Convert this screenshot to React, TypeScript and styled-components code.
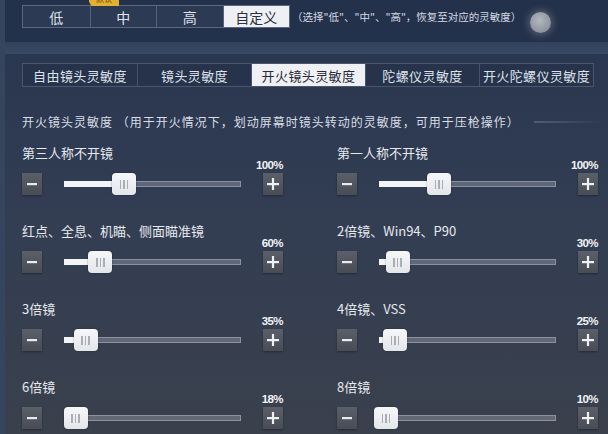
import styled, { createGlobalStyle } from "styled-components";

const GlobalStyle = createGlobalStyle`
  html, body {
    margin: 0;
    padding: 0;
    width: 608px;
    height: 434px;
    overflow: hidden;
    background: #2b3851;
  }
  * {
    box-sizing: border-box;
  }
`;

const CJK = `"Noto Sans CJK SC", "Noto Sans", sans-serif`;

const MAX = 300;
const TRACK = 177;

type Setting = { label: string; value: number };

const settings: Setting[] = [
  { label: "第三人称不开镜", value: 100 },
  { label: "第一人称不开镜", value: 100 },
  { label: "红点、全息、机瞄、侧面瞄准镜", value: 60 },
  { label: "2倍镜、Win94、P90", value: 30 },
  { label: "3倍镜", value: 35 },
  { label: "4倍镜、VSS", value: 25 },
  { label: "6倍镜", value: 18 },
  { label: "8倍镜", value: 10 },
];

const levels = ["低", "中", "高", "自定义"];
const tabs = ["自由镜头灵敏度", "镜头灵敏度", "开火镜头灵敏度", "陀螺仪灵敏度", "开火陀螺仪灵敏度"];

const App = (): JSX.Element => {
  return (
    <>
      <GlobalStyle />
      <Page>
        <TopBar>
          <Segments>
            <Badge>默认</Badge>
            {levels.map((l) => (
              <Segment key={l} $active={l === "自定义"}>
                {l}
              </Segment>
            ))}
          </Segments>
          <Hint>（选择"低"、"中"、"高"，恢复至对应的灵敏度）</Hint>
          <Knob />
        </TopBar>
        <Band />
        <Panel>
          <Tabs>
            {tabs.map((t) => (
              <Tab key={t} $active={t === "开火镜头灵敏度"}>
                {t}
              </Tab>
            ))}
          </Tabs>
          <Desc>
            开火镜头灵敏度 （用于开火情况下，划动屏幕时镜头转动的灵敏度，可用于压枪操作）
            <Dot />
          </Desc>
          <Grid>
            {settings.map((s) => {
              const center = (s.value / MAX) * TRACK;
              return (
                <Item key={s.label}>
                  <Label>{s.label}</Label>
                  <Value>{s.value}%</Value>
                  <Controls>
                    <StepButton>
                      <svg width="10" height="10" viewBox="0 0 10 10">
                        <rect x="0" y="4" width="10" height="2.2" fill="#e9ebee" />
                      </svg>
                    </StepButton>
                    <Track>
                      <Fill style={{ width: center }} />
                      <Handle style={{ left: center - 12 }}>
                        <Grip />
                        <Grip />
                        <Grip />
                      </Handle>
                    </Track>
                    <StepButton>
                      <svg width="12" height="12" viewBox="0 0 12 12">
                        <rect x="0" y="5" width="12" height="2.2" fill="#eef0f2" />
                        <rect x="4.9" y="0" width="2.2" height="12" fill="#eef0f2" />
                      </svg>
                    </StepButton>
                  </Controls>
                </Item>
              );
            })}
          </Grid>
        </Panel>
      </Page>
    </>
  );
};

export default App;

const Page = styled.div`
  width: 608px;
  height: 434px;
  display: flex;
  flex-direction: column;
  border-left: 5px solid #36455e;
  font-family: ${CJK};
  color: #e4e8ee;
  overflow: hidden;
`;

const TopBar = styled.div`
  height: 42px;
  display: flex;
  align-items: flex-start;
  padding: 5px 0 0 17px;
  background: #24314a;
`;

const Segments = styled.div`
  position: relative;
  display: grid;
  grid-template-columns: repeat(4, 66.5px);
  height: 23px;
  border: 1px solid #5b6880;
  background: #2d3a54;
`;

const Badge = styled.div`
  position: absolute;
  left: 66px;
  top: -14px;
  width: 30px;
  height: 14px;
  background: #e4b032;
  color: #6b4a10;
  font-size: 8px;
  line-height: 14px;
  text-align: center;
  clip-path: polygon(0 0, 100% 0, 100% 100%, 8% 100%, 0 70%);
`;

const Segment = styled.div<{ $active?: boolean }>`
  display: flex;
  align-items: center;
  justify-content: center;
  font-size: 14px;
  border-left: 1px solid #55627a;
  background: ${(p) => (p.$active ? "#eef0f4" : "transparent")};
  color: ${(p) => (p.$active ? "#2b303a" : "#dfe3ea")};
  &:first-child,
  &:nth-child(2) {
    border-left: none;
  }
`;

const Hint = styled.div`
  margin-left: 2px;
  font-size: 10.5px;
  line-height: 23px;
  color: #d6dbe4;
  white-space: nowrap;
`;

const Knob = styled.div`
  width: 21px;
  height: 21px;
  margin: 7px 0 0 9px;
  border-radius: 50%;
  background: radial-gradient(circle at 45% 40%, #b3b7be, #8e939c 70%);
  box-shadow: 0 0 6px 3px rgba(120, 128, 140, 0.45);
`;

const Band = styled.div`
  height: 12px;
  background: linear-gradient(180deg, #33425c, #3a4a64);
`;

const Panel = styled.div`
  flex: 1;
  padding: 9px 0 0 17px;
  background: linear-gradient(180deg, #2a3750 0%, #333e53 45%, #3a404c 100%);
`;

const Tabs = styled.div`
  display: grid;
  width: max-content;
  grid-template-columns: repeat(5, 114px);
  height: 24px;
  border: 1px solid #4a566c;
  background: #27334b;
`;

const Tab = styled.div<{ $active?: boolean }>`
  display: flex;
  align-items: center;
  justify-content: center;
  font-size: 13px;
  letter-spacing: 0.4px;
  white-space: nowrap;
  border-left: 1px solid #46526a;
  background: ${(p) => (p.$active ? "#eef0f4" : "transparent")};
  color: ${(p) => (p.$active ? "#262b35" : "#dde2ea")};
  &:first-child {
    border-left: none;
  }
`;

const Desc = styled.div`
  margin-top: 28px;
  display: flex;
  align-items: center;
  font-size: 12px;
  line-height: 14px;
  letter-spacing: 1px;
  color: #d9dee6;
  white-space: nowrap;
`;

const Dot = styled.span`
  margin-left: 14px;
  width: 70px;
  height: 2px;
  background: linear-gradient(90deg, rgba(150, 158, 172, 0.35), rgba(150, 158, 172, 0));
`;

const Grid = styled.div`
  margin-top: 17px;
  display: grid;
  grid-template-columns: 261px 261px;
  column-gap: 54px;
  row-gap: 29px;
`;

const Item = styled.div`
  display: flex;
  flex-direction: column;
`;

const Label = styled.div`
  height: 14px;
  font-size: 13px;
  line-height: 14px;
  color: #e6e9ee;
  white-space: nowrap;
`;

const Value = styled.div`
  height: 11px;
  font-family: "Liberation Sans", sans-serif;
  font-weight: bold;
  font-size: 11.5px;
  line-height: 11px;
  letter-spacing: -0.6px;
  text-align: right;
  color: #f2f3f5;
`;

const Controls = styled.div`
  margin-top: 2px;
  display: grid;
  grid-template-columns: 20px 177px 20px;
  column-gap: 22px;
  align-items: center;
  height: 22px;
`;

const StepButton = styled.div`
  width: 20px;
  height: 22px;
  display: flex;
  align-items: center;
  justify-content: center;
  background: linear-gradient(180deg, #5a5f69, #484c55);
  box-shadow: 0 1px 2px rgba(0, 0, 0, 0.35);
`;

const Track = styled.div`
  position: relative;
  height: 6px;
  background: rgba(150, 156, 168, 0.45);
  border: 1px solid rgba(190, 196, 206, 0.45);
`;

const Fill = styled.div`
  position: absolute;
  left: -1px;
  top: -1px;
  height: 6px;
  background: #f3f4f6;
`;

const Handle = styled.div`
  position: absolute;
  top: -9px;
  width: 24px;
  height: 22px;
  display: flex;
  align-items: center;
  justify-content: center;
  gap: 2px;
  border-radius: 4px;
  background: linear-gradient(180deg, #f6f7f9, #e3e6ea);
  box-shadow: 0 0 2px rgba(0, 0, 0, 0.4);
`;

const Grip = styled.span`
  width: 1.5px;
  height: 9px;
  background: #a8adb6;
`;
